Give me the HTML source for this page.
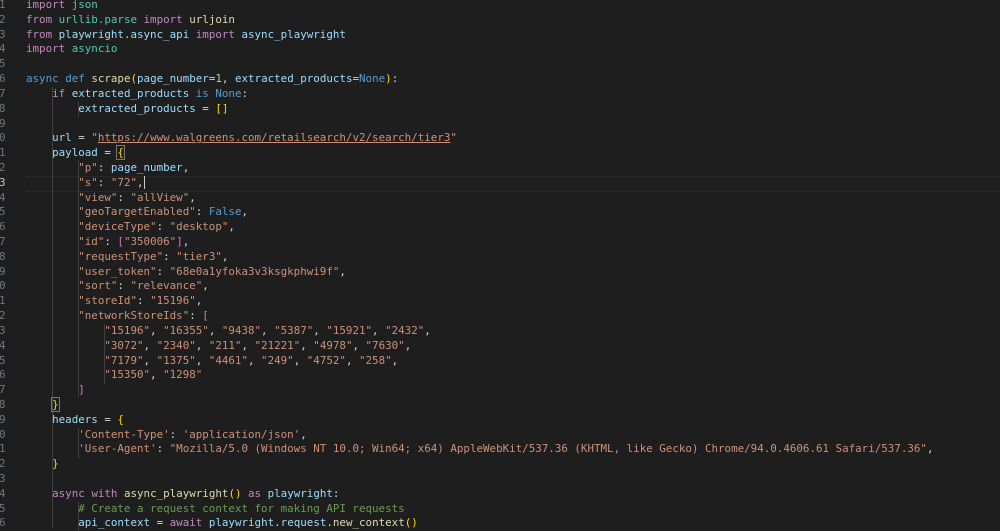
<!DOCTYPE html>
<html><head><meta charset="utf-8"><style>
html,body{margin:0;padding:0;background:#1e1e1e;width:1000px;height:528px;overflow:hidden}
.ed{position:absolute;left:0;top:-2px;font-family:"DejaVu Sans Mono","Liberation Mono",monospace;font-size:10.85px;line-height:14.82px;color:#d4d4d4}
.ln,.c{white-space:pre;position:absolute;top:0}
.ln{left:-1px;width:6px;text-align:right;color:#6e7681}
.c{left:26px}
.k{color:#c586c0}.m{color:#4ec9b0}.v{color:#9cdcfe}.s{color:#ce9178}.f{color:#dcdcaa}.b{color:#569cd6}.n{color:#b5cea8}.g{color:#6a9955}.y{color:#ffd700}.p{color:#da70d6}
.guide{position:absolute;width:1px;background:#404040}
.cur{position:absolute;left:26px;right:0;top:175.5px;height:14px;border-top:1px solid #282828;border-bottom:1px solid #282828}
</style></head><body>
<div class="cur"></div>
<div class="guide" style="left:52px;top:87px;height:441px"></div>
<div class="guide" style="left:78px;top:102px;height:15px"></div>
<div class="guide" style="left:78px;top:161px;height:236px"></div>
<div class="guide" style="left:104px;top:324px;height:60px"></div>
<div class="guide" style="left:78px;top:428px;height:30px"></div>
<div class="guide" style="left:78px;top:502px;height:28px"></div>
<div class="ed"><div class="ln">1
2
3
4
5
6
7
8
9
0
1
2
<span style="color:#c6c6c6">3</span>
4
5
6
7
8
9
0
1
2
3
4
5
6
7
8
9
0
1
2
3
4
5
6</div><div class="c"><span class="k">import</span> <span class="m">json</span>
<span class="k">from</span> <span class="m">urllib.parse</span> <span class="k">import</span> <span class="f">urljoin</span>
<span class="k">from</span> <span class="v">playwright.async_api</span> <span class="k">import</span> <span class="v">async_playwright</span>
<span class="k">import</span> <span class="m">asyncio</span>

<span class="b">async</span> <span class="b">def</span> <span class="f">scrape</span><span class="y">(</span><span class="v">page_number</span>=<span class="n">1</span>, <span class="v">extracted_products</span>=<span class="b">None</span><span class="y">)</span>:
    <span class="k">if</span> <span class="v">extracted_products</span> <span class="b">is</span> <span class="b">None</span>:
        <span class="v">extracted_products</span> = <span class="y">[]</span>

    <span class="v">url</span> = <span class="s">"<u>https://www.walgreens.com/retailsearch/v2/search/tier3</u>"</span>
    <span class="v">payload</span> = <span class="y" style="outline:1px solid #777">{</span>
        <span class="s">"p"</span>: <span class="v">page_number</span>,
        <span class="s">"s"</span>: <span class="s">"72"</span>,<span style="border-left:1px solid #ccc"></span>
        <span class="s">"view"</span>: <span class="s">"allView"</span>,
        <span class="s">"geoTargetEnabled"</span>: <span class="b">False</span>,
        <span class="s">"deviceType"</span>: <span class="s">"desktop"</span>,
        <span class="s">"id"</span>: <span class="p">[</span><span class="s">"350006"</span><span class="p">]</span>,
        <span class="s">"requestType"</span>: <span class="s">"tier3"</span>,
        <span class="s">"user_token"</span>: <span class="s">"68e0a1yfoka3v3ksgkphwi9f"</span>,
        <span class="s">"sort"</span>: <span class="s">"relevance"</span>,
        <span class="s">"storeId"</span>: <span class="s">"15196"</span>,
        <span class="s">"networkStoreIds"</span>: <span class="p">[</span>
            <span class="s">"15196"</span>, <span class="s">"16355"</span>, <span class="s">"9438"</span>, <span class="s">"5387"</span>, <span class="s">"15921"</span>, <span class="s">"2432"</span>,
            <span class="s">"3072"</span>, <span class="s">"2340"</span>, <span class="s">"211"</span>, <span class="s">"21221"</span>, <span class="s">"4978"</span>, <span class="s">"7630"</span>,
            <span class="s">"7179"</span>, <span class="s">"1375"</span>, <span class="s">"4461"</span>, <span class="s">"249"</span>, <span class="s">"4752"</span>, <span class="s">"258"</span>,
            <span class="s">"15350"</span>, <span class="s">"1298"</span>
        <span class="p">]</span>
    <span class="y" style="outline:1px solid #777">}</span>
    <span class="v">headers</span> = <span class="y">{</span>
        <span class="s">'Content-Type'</span>: <span class="s">'application/json'</span>,
        <span class="s">'User-Agent'</span>: <span class="s">"Mozilla/5.0 (Windows NT 10.0; Win64; x64) AppleWebKit/537.36 (KHTML, like Gecko) Chrome/94.0.4606.61 Safari/537.36"</span>,
    <span class="y">}</span>

    <span class="k">async</span> <span class="k">with</span> <span class="f">async_playwright</span><span class="y">()</span> <span class="k">as</span> <span class="v">playwright</span>:
        <span class="g"># Create a request context for making API requests</span>
        <span class="v">api_context</span> = <span class="k">await</span> <span class="v">playwright</span>.<span class="v">request</span>.<span class="f">new_context</span><span class="y">()</span></div></div>
</body></html>
